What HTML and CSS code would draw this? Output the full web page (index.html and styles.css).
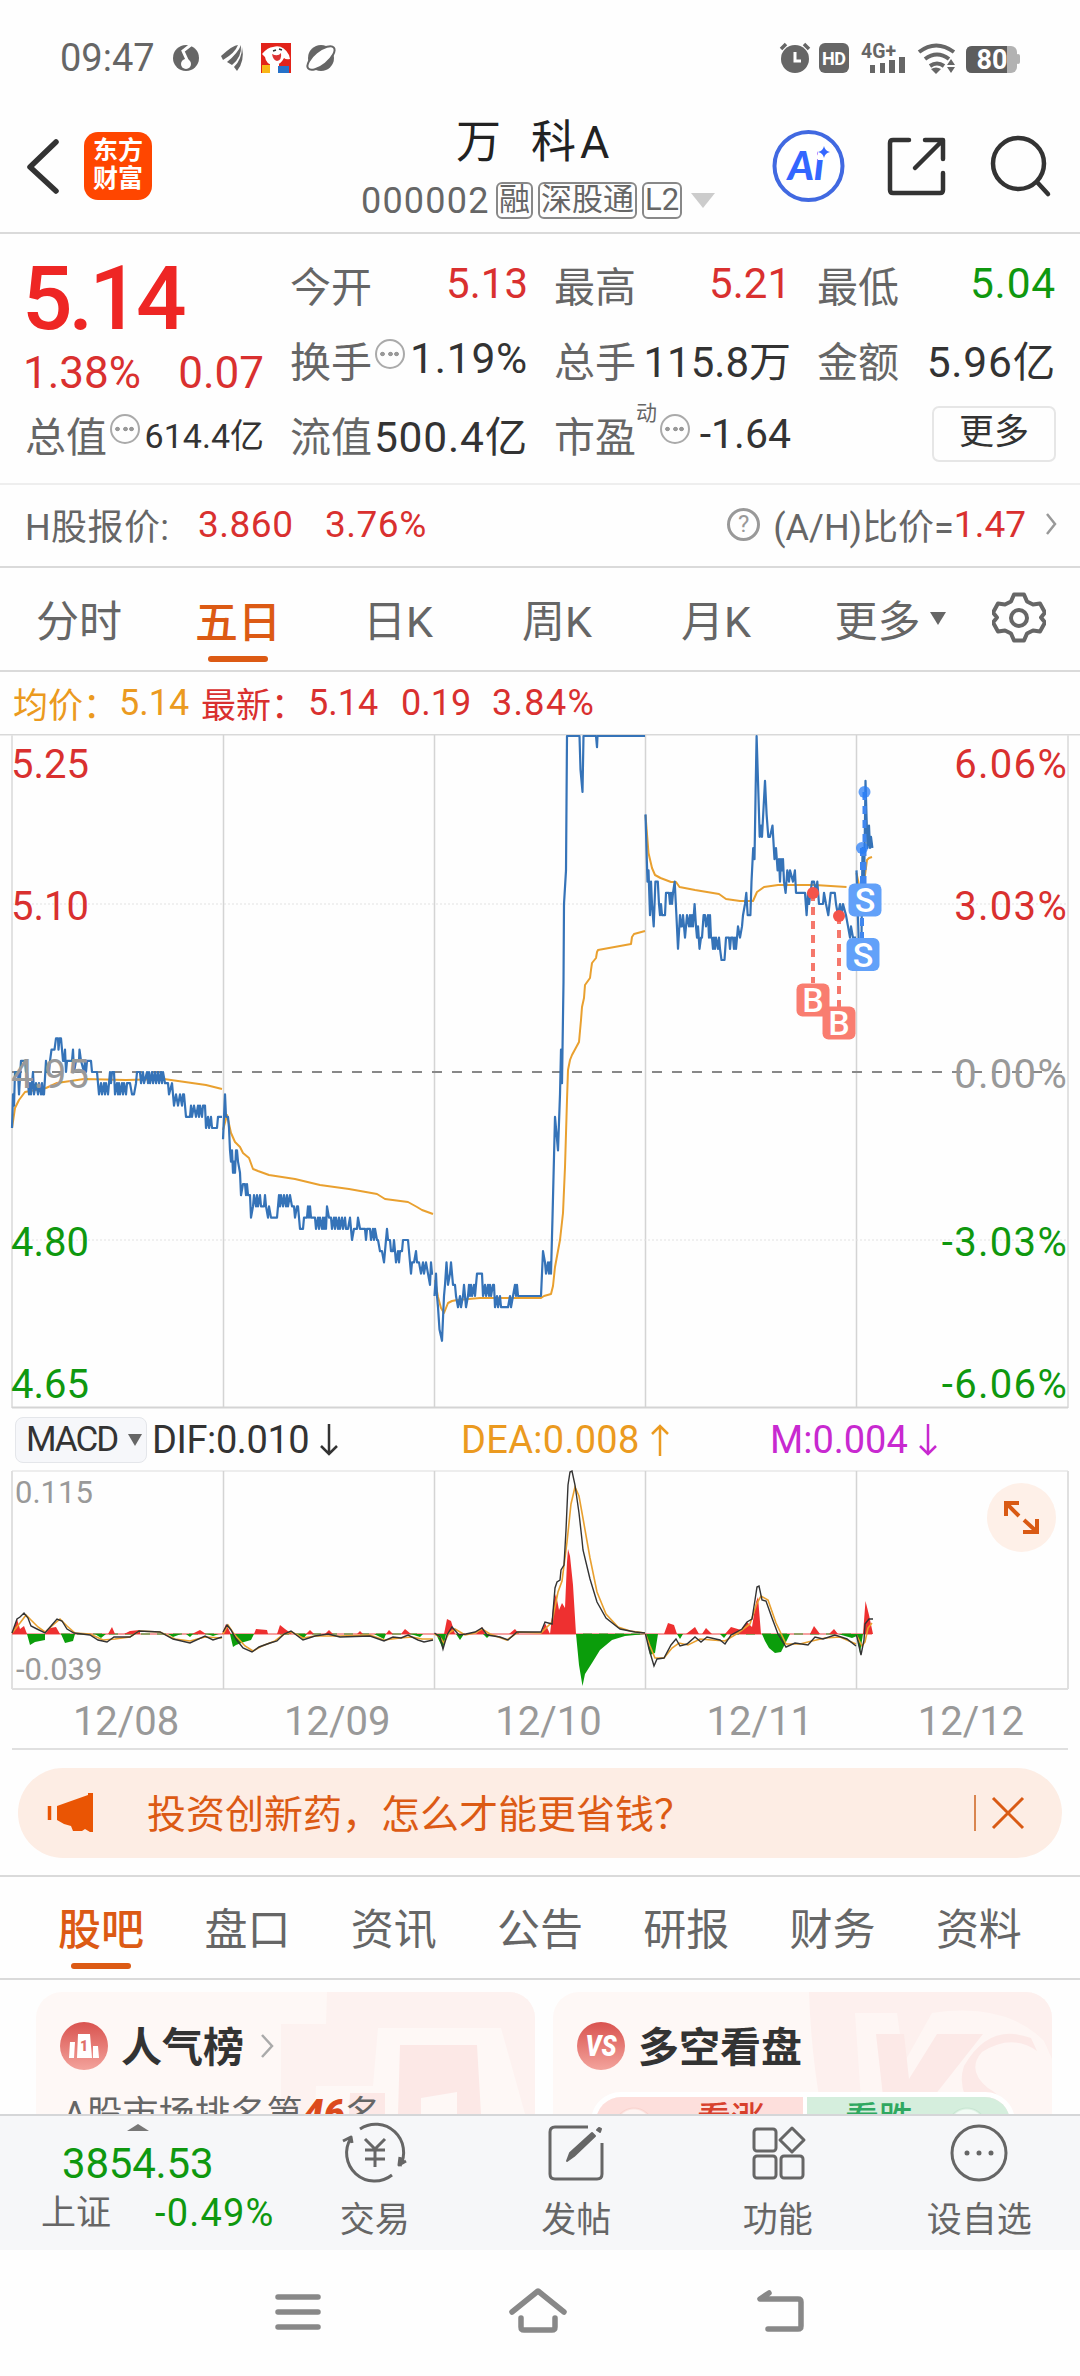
FILE: index.html
```html
<!DOCTYPE html>
<html lang="zh-CN">
<head>
  <meta charset="UTF-8">
  <meta name="viewport" content="width=device-width, initial-scale=1.0">
  <title>万 科A 000002</title>
  <link rel="stylesheet" href="styles.css">
</head>
<body>

  <div class="status">
    <span class="clock">09:47</span>
    <svg class="status-left" width="170" height="36" viewBox="170 40 170 36">
      <circle cx="186" cy="58" r="13" fill="#666"/>
      <path d="M192 44 L183 51 L188 62" fill="none" stroke="#fff" stroke-width="3"/>
      <circle cx="186" cy="64" r="5" fill="#fff"/>
      <path d="M221 56q12-11 17-11q-3 8-15 15z M227 62q11-9 14-17q1 12-9 20z M234 67q8-8 8-20q3 14-5 24z" fill="#666"/>
      <rect x="261" y="43" width="30" height="30" fill="#e2231a"/>
      <path d="M262 54q6-7 11-7q10-3 16 8l1 4q-4 1-6-1q-4 8-11 7q-7-1-8-8z" fill="#fff"/>
      <path d="M272 54q6 3 9-1q1 7-4 8q-4-1-5-7z" fill="#d33"/>
      <path d="M273 51l3-1M279 49l3 1" stroke="#333" stroke-width="1.5"/>
      <path d="M270 64h9v9h-9z" fill="#fff"/>
      <path d="M262 65h8v8h-8z" fill="#f8b617"/>
      <path d="M278 66h11v7h-11z" fill="#2672c9"/>
      <circle cx="321" cy="58" r="13" fill="#666"/>
      <ellipse cx="321" cy="58" rx="16.500" ry="7" transform="rotate(-39 321 58)" fill="#fff" stroke="#666" stroke-width="2"/>
    </svg>
    <svg class="status-right" width="245" height="36" viewBox="778 40 245 36">
      <circle cx="795" cy="59" r="14" fill="#666"/>
      <path d="M781 49l5-5M804 44l5 5" stroke="#666" stroke-width="3.5"/>
      <path d="M795 52v9h6" fill="none" stroke="#fff" stroke-width="3"/>
      <rect x="819" y="43" width="30" height="30" rx="6" fill="#666"/>
      <text x="834" y="65" class="s-hd" textLength="24">HD</text>
      <text x="861" y="58" class="s-4g" textLength="35" lengthAdjust="spacingAndGlyphs">4G+</text>
      <path d="M870 65h5v8h-5zM880 63h5v10h-5zM889 60h6v13h-6zM899 57h6v16h-6z" fill="#666"/>
      <g fill="none" stroke="#666" stroke-width="4">
        <path d="M919 52q17-13 35 0"/>
        <path d="M925 59q12-9 24 0"/>
        <path d="M930 66q7-5 14 0"/>
      </g>
      <path d="M931 69q5-3 10 0l-5 5z" fill="#666"/>
      <path d="M947 65l4-6l4 6zM947 67l4 6l4-6z" fill="#666"/>
      <rect x="966" y="46" width="51" height="27" rx="6" fill="#b2b2b2"/>
      <rect x="1016" y="54" width="4" height="10" rx="2" fill="#b2b2b2"/>
      <path d="M972 46h35v27h-35q-6 0-6-6v-15q0-6 6-6z" fill="#5d5d5d"/>
      <text x="992" y="69" class="s-bat">80</text>
    </svg>
  </div>

  <header class="header">
    <div class="header-left">
      <svg width="34" height="60" viewBox="25 136 34 60"><path d="M56 142L30 167L56 191" fill="none" stroke="#333" stroke-width="5.5" stroke-linecap="round" stroke-linejoin="round"/></svg>
      <div class="logo">东方<br>财富</div>
    </div>
    <div class="stock">
      <div class="stock-name"><span>万</span><span>科A</span></div>
      <div class="stock-code">
        <span class="code">000002</span>
        <span class="tag">融</span>
        <span class="tag">深股通</span>
        <span class="tag">L2</span>
        <span class="drop"></span>
      </div>
    </div>
    <svg class="header-icons" width="285" height="76" viewBox="770 128 285 76">
      <circle cx="808.5" cy="166" r="34" fill="#fff" stroke="#4169e1" stroke-width="4"/>
      <text x="806" y="180" class="ai">Ai</text>
      <rect x="818" y="145" width="15" height="15" fill="#fff"/>
      <path d="M824 146q1 5 6 6q-5 1-6 6q-1-5-6-6q5-1 6-6z" fill="#3366ff"/>
      <g fill="none" stroke="#333" stroke-width="4.5" stroke-linecap="round" stroke-linejoin="round">
        <path d="M909 140h-16q-3 0-3 3v47q0 3 3 3h47q3 0 3-3v-17"/>
        <path d="M925 140h18v19M942 141l-27 27"/>
        <circle cx="1018.5" cy="163.5" r="25.5"/>
        <path d="M1037 182l11 12"/>
      </g>
    </svg>
  </header>

  <section class="quote">
    <div class="price-box">
      <div class="price">5.14</div>
      <div class="change"><span>1.38%</span><span>0.07</span></div>
    </div>
    <div class="cell"><span class="k">今开</span><span class="v red">5.13</span></div>
    <div class="cell"><span class="k">最高</span><span class="v red">5.21</span></div>
    <div class="cell"><span class="k">最低</span><span class="v wide green">5.04</span></div>
    <div class="cell"><span class="k">换手</span><span class="info"></span><span class="v wide">1.19%</span></div>
    <div class="cell"><span class="k">总手</span><span class="v">115.8万</span></div>
    <div class="cell"><span class="k">金额</span><span class="v wide">5.96亿</span></div>
    <div class="cell"><span class="k">总值</span><span class="info"></span><span class="v small">614.4亿</span></div>
    <div class="cell"><span class="k">流值</span><span class="v wide">500.4亿</span></div>
    <div class="cell"><span class="k">市盈</span><sup class="dong">动</sup><span class="info"></span><span class="v mid">-1.64</span></div>
    <div class="cell"><span class="more-btn">更多</span></div>
  </section>

  <section class="hshare">
    <span class="h-label">H股报价:</span>
    <span class="red h-price">3.860</span>
    <span class="red h-rate">3.76%</span>
    <span class="help">?</span>
    <span>(A/H)比价=</span><span class="red ratio">1.47</span>
    <svg class="arrow" width="12" height="24" viewBox="0 0 12 24"><path d="M2 2l8 10l-8 10" fill="none" stroke="#999" stroke-width="2.5"/></svg>
  </section>

  <nav class="periods">
    <span>分时</span>
    <span class="active">五日</span>
    <span>日K</span>
    <span>周K</span>
    <span>月K</span>
    <span class="more">更多<i class="caret"></i></span>
    <svg width="54" height="54" viewBox="-27 -27 54 54">
      <path d="M-5 -23h10l3 7l6 3l7-1l5 9l-4 5l4 5l-5 9l-7-1l-6 3l-3 7h-10l-3-7l-6-3l-7 1l-5-9l4-5l-4-5l5-9l7 1l6-3z" transform="translate(0 -.5)" fill="none" stroke="#666" stroke-width="4" stroke-linejoin="round"/>
      <circle r="8" fill="none" stroke="#666" stroke-width="4"/>
    </svg>
  </nav>

  <div class="latest">
    <span class="avg">均价：</span><span class="avg n1">5.14</span>
    <span class="red">最新：</span><span class="red n2">5.14</span>
    <span class="red n3">0.19</span>
    <span class="red n4">3.84%</span>
  </div>

  <!-- 五日分时图 -->
  <svg class="chart" width="1080" height="675" viewBox="0 734 1080 675">
    <path d="M0 734.5H1080" stroke="#d9d9d9" stroke-width="2"/>
    <path d="M12 735V1408M1068 735V1408" stroke="#e2e2e2" stroke-width="2"/>
    <path d="M223.5 735V1408M434.5 735V1408M645.5 735V1408M856.5 735V1408" stroke="#d4d4d4" stroke-width="1.5"/>
    <path d="M12 1407.5H1068" stroke="#d4d4d4" stroke-width="2"/>
    <path d="M12 904H1068M12 1240H1068" stroke="#e2e2e2" stroke-dasharray="2 2"/>
    <path d="M12 1072H1064" stroke="#888" stroke-width="2" stroke-dasharray="10 10"/>
    <g class="line-avg">
      <polyline points="12,1128 15,1108 19,1100 25,1092 46,1088 57,1083 84,1079 126,1080 164,1079 185,1082 206,1085 222,1089"/>
      <polyline points="223,1130 227,1115 231,1133 235,1142 240,1147 243,1153 249,1158 253,1169 258,1171 269,1175 295,1179 320,1185 349,1189 377,1194 385,1199 408,1202 417,1207 422,1210 433,1214"/>
      <polyline points="435,1280 438,1297 441,1308 444,1313 448,1303 452,1301 457,1300 480,1298 541,1298 544,1296 551,1294 553,1286 555,1267 560,1240 563,1213 565,1167 567,1100 568,1070 570,1060 572,1055 579,1042 581,1020 582,1007 584,998 585,985 590,978 591,970 592,963 596,958 597,952 598,950 609,948 631,944 632,937 634,934 645,931"/>
      <polyline points="645.5,815 648.5,853 652,868 655,875 660.5,878 671,882 676,882 679.5,887 695,890 719,894 726,899 740,901 753,901 757,892 764,887 778,885 815,885 846.5,887"/>
      <polyline points="856.5,873 859,885 862,892 865,875 867,860 869,858 872,857"/>
    </g>
    <!-- y 为相对昨收的价位(分) -->
    <g class="line-price" transform="translate(0 1072) scale(1 -11.2)">
      <polyline points="12,-5 13,-2 14,-3 15,0 18,0 19,-2 21,1 25,1 26,0 27,0 29,-2 30,-1 31,-2 33,0 34,-2 36,-1 38,-2 39,-1 41,-2 42,-1 43,-2 44,-2 46,1 47,0 49,0 50,1 51.5,2 54.5,2 56,3 58,3 58.5,2 59.5,3 61,3 62,2 63,1 64,1 65,2 66,0 67,1 72,1 73,2 74,0 76,1 79,1 79.5,2 81,1 84,0 85,1 86,0 87,1 91,1 92,0 97,0 99,-2 101,-1 102,-2 104,-1 105,-2 106,-1 108,-2 110,0 111,-1 112,0 114,0 115,-2 117,-1 118,-2 119,-1 120,-2 122,-1 123,-2 124,-1 126,-2 127,-1 130,-1 132,-2 134,-2 136,-1 137,0 140,0 141,-1 143,0 144,-1 147,0 148,-1 149,0 150,-1 152,0 153,-1 155,0 156,-1 158,0 159,-1 161,0 162,-1 163,0 165,-1 168,-1 169,-2 172,-1 174,-3 176,-2 178,-3 180,-2 182,-3 183,-2 184,-2 186,-4 190,-4 191,-3 192,-4 194,-3 196,-4 198,-3 199,-4 200,-3 202,-4 203,-3 205,-3 206,-5 208,-4 209,-5 211,-4 212,-5 217,-5 218,-4 222,-4"/>
      <polyline points="223,-6 225,-2 226,-4 228,-4 229,-5 230,-7 231,-8 232,-7 233,-9 234,-8 235,-9 236,-7 237,-7 238,-8 240,-9 241,-11 243,-10 245,-10 246,-11 247,-10 248,-11 250,-11 251,-13 253,-12 254,-11 256,-12 257,-11 258,-12 260,-11 261,-12 264,-12 265,-11 266,-12 268,-13 269,-12 271,-13 277,-13 279,-11 280,-12 281,-11 283,-12 284,-11 286,-12 287,-11 288,-12 290,-11 292,-12 294,-12 295,-13 297,-12 298,-12 300,-14 303,-14 304,-13 307,-13 308,-12 309,-13 310,-12 311,-13 315,-13 316,-14 318,-13 319,-14 320,-13 322,-14 323,-13 324,-14 325,-13 326,-14 327,-12 329,-13 331,-13 332,-14 334,-13 335,-14 336,-13 338,-14 339,-13 340,-14 342,-13 343,-14 345,-13 346,-14 348,-14 350,-13 351,-14 352,-15 354,-14 357,-14 358,-13 360,-14 365,-14 366,-15 367,-14 370,-14 371,-15 373,-14 374,-15 375,-14 377,-15 378,-15 380,-16 382,-16 384,-17 385,-16 387,-14 388,-15 390,-15 391,-16 393,-16 394,-15 396,-17 398,-16 399,-17 400,-16 402,-16 403,-15 408,-15 409,-16 411,-18 412,-17 414,-17 416,-16 417,-17 419,-17 421,-18 423,-17 424,-18 426,-17 428,-18 430,-19 431,-17 432,-18 433,-18"/>
      <polyline points="434.5,-20 436,-18 437,-20 438,-21 439.5,-23 442,-24 444,-20 445,-19 446.5,-17 448,-19 450,-18 451,-17 453,-19 455,-19 456,-20 458,-21 460,-20 461,-21 463,-20 464,-19 466,-21 468,-20 469,-19 470,-20 471,-19 472,-20 474,-19 475,-20 477,-18 482,-18 483,-20 485,-19 486,-20 488,-19 489,-20 490,-19 491,-20 493,-19 494,-19 495,-21 497,-20 498,-21 500,-20 501,-21 508,-21 510,-20 511,-21 513,-20 515,-19 516,-20 517,-19 518,-20 541,-20 543,-16 545,-17 546,-18 548,-17 549,-18 550,-17 551,-18 552.5,-13 555,-4 556,-5 558,-7 560,-2 561,2 562,-1 563.5,8 564,15 566,18 566.5,24 567,30 579.5,30 580.5,27 582.5,25 583.5,30 596,30 597,29 597.5,30 645,30"/>
      <polyline points="645.5,23 646.8,19 647.5,17 648.5,18 650,14 651,17 652,15 653.7,13 655.4,17 657.8,17 659,15 660,14 661,15 662,14 665,14 666,16 669,16 670,15 671,16 672,15 673,16 674.7,17 676.4,14 678,11 680,14 681,13 682,13 683,14 685,12 686,13 687,14 689,13 690,14 691,13 692,14 693,13 694.6,15 696,13 697,12 698,13 699.5,11 701,12 702,12 703.6,14 705,14 706,13 708,14 709,12 710,14 711,12 712,12 713,11 714,12 715,11 716,12 718,11 719,12 720,11 721.5,10 724.5,10 726,12 729,12 730,11 731,12 733,12 734,11 735,12 736,11 738,13 740,12 742,13 743,14 745,15 746.3,16 747.7,14 750.4,14 751.5,17 753.2,20 754.5,19 755.6,25 756.6,30 758,26 759.7,21 761,22 762,21 765,26 766.6,23 768.3,21 770,21 772.5,22 774.5,19 776,20 777.6,18 779,19 780,17 781,19 782,18 783,19 784,17 785.6,16 787.3,18 789,17 790,18 793,17 794.9,18 796,16 805,16 806.6,14 808,16 809,15 812,17 814,17 816,16 817.3,17 819,15 823,15 824,16 826,15 828.3,14 830.7,16 834.8,16 836,15 838,14 840,15 841.7,14 843,15 846,14 848,13 850,12 851,13 853,12 856,12"/>
      <polyline points="856.5,18 858.6,12 860,11 861.5,12 862.5,20 864,16 865.5,26 866.8,22 867.5,20 869,22 870,20 871,21 872.4,20"/>
    </g>
    <g class="axis">
      <text x="11" y="778" class="up">5.25</text>
      <text x="11" y="920" class="up">5.10</text>
      <text x="11" y="1088" class="flat">4.95</text>
      <text x="11" y="1256" class="down">4.80</text>
      <text x="11" y="1398" class="down">4.65</text>
    </g>
    <g class="axis right">
      <text x="1068" y="778" class="up">6.06%</text>
      <text x="1068" y="920" class="up">3.03%</text>
      <text x="1068" y="1088" class="flat">0.00%</text>
      <text x="1068" y="1256" class="down">-3.03%</text>
      <text x="1068" y="1398" class="down">-6.06%</text>
    </g>
    <path d="M813 893V983M839 916V1008" stroke="#f5786c" stroke-width="4" stroke-dasharray="8 6"/>
    <path d="M864.5 792V885M862 848V940" stroke="#3f86ee" stroke-width="4" stroke-dasharray="8 6"/>
    <g fill="#f5544a"><circle cx="813" cy="893" r="6"/><circle cx="839" cy="916" r="6"/></g>
    <g fill="#2a7df5" fill-opacity=".75"><circle cx="864.5" cy="792" r="6"/><circle cx="862" cy="848" r="6"/></g>
    <g class="mark">
      <rect x="796.5" y="983.5" width="33" height="33" rx="6" fill="#f97d70"/><text x="813" y="1012">B</text>
      <rect x="822.5" y="1006.5" width="33" height="33" rx="6" fill="#f97d70"/><text x="839" y="1035">B</text>
      <rect x="848.5" y="883.5" width="33" height="33" rx="6" fill="#62a1f9"/><text x="865" y="912">S</text>
      <rect x="846.5" y="938" width="33" height="33" rx="6" fill="#62a1f9"/><text x="863" y="967">S</text>
    </g>
  </svg>

  <div class="macd-head">
    <span class="chip">MACD<i class="caret"></i></span>
    <span class="dif">DIF:0.010<svg width="18" height="34" viewBox="0 0 18 34"><path d="M9 1v30M1 23l8 8l8-8"/></svg></span>
    <span class="dea">DEA:0.008<svg width="18" height="34" viewBox="0 0 18 34"><path d="M9 33v-30M1 11l8-8l8 8"/></svg></span>
    <span class="m">M:0.004<svg width="18" height="34" viewBox="0 0 18 34"><path d="M9 1v30M1 23l8 8l8-8"/></svg></span>
  </div>

  <svg class="macd" width="1080" height="220" viewBox="0 1470 1080 220">
    <path d="M12 1471H1068" stroke="#dcdcdc"/>
    <path d="M12 1471V1689M1068 1471V1689M12 1689H1068" fill="none" stroke="#e0e0e0" stroke-width="2"/>
    <path d="M223.5 1471V1689M434.5 1471V1689M645.5 1471V1689M856.5 1471V1689" stroke="#d4d4d4" stroke-width="1.5"/>
    <text x="15" y="1503" class="scale">0.115</text>
    <text x="16" y="1680" class="scale">-0.039</text>
    <path d="M12 1634H872" stroke="#e44" stroke-width="1"/>
    <path d="M61 1634H218M280 1634H420M583 1634H645M730 1634H856" stroke="#2ca02c" stroke-width="1" stroke-dasharray="9 7"/>
    <path fill="#ee3030" d="M12 1634L17 1619L20 1629L24 1626L27 1634zM45 1634L50 1628L56 1627L60 1634zM108 1634L112 1627L115 1634zM124 1634L130 1631L140 1630V1634zM192 1634L200 1630L206 1634zM222 1634L226 1624L231 1634zM254 1634L256 1629L267 1630L268 1634zM277 1634L280 1625L285 1629L292 1634zM306 1634L310 1630L314 1634zM325 1634L329 1630L333 1634zM357 1634L360 1631L363 1634zM386 1634L389 1630L393 1634zM401 1634L405 1629L411 1634zM444 1634L447 1619L451 1621L455 1634zM476 1634L482 1627L485 1634zM509 1634L515 1629L519 1634zM541 1634L545 1623L550 1634L554 1600L556 1594L559 1610L562 1603L565 1608L567 1562L568 1549L570 1556L573 1585L576 1634zM664 1634L668 1623L674 1625L677 1634zM686 1634L695 1627L699 1634zM702 1634L706 1628L712 1634zM725 1634L731 1627L741 1630L747 1622L752 1627L756 1602L758 1597L761 1634zM810 1634L814 1626L820 1634zM829 1634L834 1629L838 1634zM863 1634L865.5 1601L869 1615L873 1634z"/>
    <path fill="#0b9d0b" d="M27 1634L30 1645L35 1642L45 1640V1634zM61 1634L65 1643L73 1641L75 1634zM95 1634L101 1638L106 1634zM168 1634L173 1637L181 1634zM186 1634L190 1637L193 1634zM207 1634L213 1636L219 1634zM230 1634L233 1647L236 1645L244 1642L251 1640L254 1634zM298 1634L303 1639L307 1634zM374 1634L384 1639L386 1634zM411 1634L420 1637L423 1634zM436 1634L443 1649L446 1634zM456 1634L460 1640L464 1634zM483 1634L487 1638L491 1634zM576 1634L579 1665L582.5 1686L585 1674L592 1663L600 1650L612 1640L625 1636L645 1634zM646 1634L650 1655L655 1653L658 1634zM677 1634L680 1639L683 1634zM720 1634L724 1638L727 1634zM762 1634L765 1641L769 1648L775 1653L781 1652L790 1634zM838 1634L852 1638L857 1636L860 1653L863 1634z"/>
    <g class="macd-slow">
      <polyline points="12,1633 20,1623 26,1615 31,1620 38,1627 45,1632 53,1625 60,1619 67,1626 75,1633 90,1634 103,1640 115,1639 130,1637 139,1631 160,1632 175,1639 190,1641 205,1637 222,1638"/>
      <polyline points="223,1634 228,1625 234,1634 245,1646 253,1651 262,1646 275,1641 284,1634 292,1632 303,1638 315,1636 340,1636 370,1635 384,1640 400,1638 412,1637 422,1639 433,1639"/>
      <polyline points="434.5,1634 440,1637 444,1643 449,1633 455,1629 465,1635 475,1633 482,1629 490,1634 507,1640 518,1632 541,1633 552,1622 558,1592 562,1581 567,1542 571,1504 575,1487 579,1496 584,1524 590,1558 597,1592 606,1614 618,1627 630,1631 645,1633"/>
      <polyline points="645.5,1634 650,1646 655,1658 664,1658 672,1648 679,1643 688,1645 700,1639 712,1640 725,1641 738,1633 750,1624 757,1603 761,1596 768,1600 776,1623 786,1644 800,1644 812,1641 825,1638 840,1637 856,1644"/>
      <polyline points="856.5,1635 862,1646 865,1642 868,1628 872,1623"/>
    </g>
    <g class="macd-fast">
      <polyline points="12,1633 17,1619 20,1617 24,1613 28,1618 31,1626 37,1629 45,1633 51,1626 57,1619 62,1621 67,1629 74,1633 90,1635 98,1640 107,1642 114,1637 130,1637 139,1631 160,1632 173,1639 190,1643 205,1636 213,1640 222,1637"/>
      <polyline points="223,1632 227,1625 231,1630 236,1639 243,1648 252,1652 259,1647 270,1643 277,1641 284,1634 291,1631 303,1640 315,1636 328,1634 340,1637 370,1636 384,1641 393,1637 401,1638 408,1635 418,1640 424,1642 433,1640"/>
      <polyline points="434.5,1633 440,1637 443,1649 447,1635 452,1627 459,1635 466,1634 475,1632 482,1628 487,1635 500,1637 508,1640 517,1632 541,1632 545,1622 552,1624 555,1588 557,1582 560,1580 561,1570 564,1565 566,1530 568,1485 570,1472 572,1471 575,1485 579,1513 582,1540 583,1550 590,1579 597,1602 606,1618 620,1629 635,1632 645,1633"/>
      <polyline points="645.5,1634 649,1649 654,1666 657,1659 664,1658 671,1645 676,1639 680,1646 687,1644 695,1637 701,1642 707,1637 720,1640 725,1644 731,1635 742,1629 747,1622 752,1619 755,1600 757,1587 759,1586 762,1600 766,1601 772,1618 778,1634 786,1647 795,1643 808,1645 815,1637 823,1639 835,1635 847,1639 856,1646"/>
      <polyline points="856.5,1635 861,1655 864,1640 865,1624 869,1619 873,1619"/>
    </g>
    <circle cx="1021.5" cy="1517.5" r="34.5" fill="#fef0e8"/>
    <path d="M1006 1516v-13h13M1007 1504l12 12M1037 1519v13h-14M1036 1531l-12-11" fill="none" stroke="#d95a14" stroke-width="4"/>
  </svg>

  <div class="dates">
    <span>12/08</span><span>12/09</span><span>12/10</span><span>12/11</span><span>12/12</span>
  </div>

  <div class="banner">
    <svg width="48" height="42" viewBox="46 1792 48 42"><path d="M93 1793v39h-3l-5-3l-3 2h-9l-2-5l-7-2l-7-4v-14l31-11v-2z" fill="#ea5504"/><path d="M49.500 1806v14" stroke="#ea5504" stroke-width="3.500"/></svg>
    <span class="banner-text">投资创新药，怎么才能更省钱？</span>
    <span class="split"></span>
    <svg width="34" height="34" viewBox="0 0 34 34"><path d="M2 2l30 30M32 2l-30 30" stroke="#d95a14" stroke-width="3"/></svg>
  </div>

  <nav class="tabs">
    <span class="active">股吧</span>
    <span>盘口</span>
    <span>资讯</span>
    <span>公告</span>
    <span>研报</span>
    <span>财务</span>
    <span>资料</span>
  </nav>

  <section class="cards">
    <div class="card rank">
      <div class="card-title">
        <svg width="48" height="48" viewBox="0 0 48 48">
          <defs><linearGradient id="badge" x1="0" y1="0" x2="0" y2="1"><stop offset="0" stop-color="#d9534f"/><stop offset="1" stop-color="#f3a39c"/></linearGradient></defs>
          <circle cx="24" cy="24" r="24" fill="url(#badge)"/>
          <path d="M10 20h5l-1 16h-5zM18 12h12l2 24h-15zM33 24h5l1 12h-6z" fill="#fff"/>
          <text x="24" y="29" class="badge-one">1</text>
        </svg>
        <b>人气榜</b>
        <svg class="go" width="14" height="24" viewBox="0 0 14 24"><path d="M2 1l10 11l-10 11" fill="none" stroke="#aaa" stroke-width="2.5"/></svg>
      </div>
      <div class="rank-text">A股市场排名第<em>46</em>名</div>
      <svg class="card-bg" width="260" height="122" viewBox="275 1992 260 122">
        <path d="M327 1992h208v122h-10l-24-86h-123l-5 58h-57l-1 28h-34v-90h45z" fill="#fdf2f0"/>
        <path d="M400 2045h77l4 69h-24v-22l-36 6v16h-23zM350 2093h35v21h-36z" fill="#fce8e6"/>
      </svg>
    </div>
    <div class="card versus">
      <div class="card-title">
        <svg width="48" height="48" viewBox="0 0 48 48">
          <circle cx="24" cy="24" r="24" fill="url(#badge)"/>
          <text x="24" y="34" class="badge-vs" textLength="31" lengthAdjust="spacingAndGlyphs">VS</text>
        </svg>
        <b>多空看盘</b>
      </div>
      <div class="vote"><span class="rise">看涨</span><span class="fall">看跌</span></div>
      <svg class="card-bg" width="245" height="122" viewBox="807 1992 245 122">
        <path d="M809 1992h243v122h-230q-11-60-13-122z" fill="#fdf0ee"/>
        <path d="M855 2013h42l7 50l28-50q74-11 112 28l8 18v55h-190z" fill="#fef6f4"/>
        <path d="M876 2034h28l5 45l28-45h46l-63 80h-35zM1037 2051q-25-18-55 1q-16 18 6 36q20 12 20 26h-32q-20-25-12-48q25-44 67-28z" fill="#fce9e7"/>
      </svg>
    </div>
  </section>

  <footer class="toolbar">
    <div class="index">
      <i class="caret-up"></i>
      <div class="index-value">3854.53</div>
      <div class="index-row"><span>上证</span><span class="green rate">-0.49%</span></div>
    </div>
    <div class="tool">
      <svg width="68" height="62" viewBox="-34 -31 68 62">
        <path d="M-15 -24A28 28 0 0 1 25 13M17 22A28 28 0 0 1 -24 -15M-32 -12l8-4l1 6M31 8l-7 4l1-8"/>
        <path d="M-10 -14l10 10l10-10M0 -4v18M-10 -3h20M-10 6h20"/>
      </svg>
      <span>交易</span>
    </div>
    <div class="tool">
      <svg width="68" height="62" viewBox="-34 -31 68 62">
        <path d="M12 -26h-33q-5 0-5 5v42q0 5 5 5h42q5 0 5-5v-31"/>
        <path d="M-9 8l3-8l22-20l3 3l-21 20z" class="solid"/>
        <path d="M21 -23l2-2l2 1l-1 3z" class="solid"/>
      </svg>
      <span>发帖</span>
    </div>
    <div class="tool">
      <svg width="68" height="62" viewBox="-34 -31 68 62">
        <rect x="-24" y="-24" width="22" height="22" rx="3"/>
        <rect x="-24" y="3" width="22" height="22" rx="3"/>
        <rect x="3" y="3" width="22" height="22" rx="3"/>
        <path d="M14 -25l12 12l-12 12l-12-12z"/>
      </svg>
      <span>功能</span>
    </div>
    <div class="tool">
      <svg width="68" height="62" viewBox="-34 -31 68 62">
        <circle r="27"/>
        <g class="solid"><circle cx="-12" r="1.500"/><circle r="1.500"/><circle cx="12" r="1.500"/></g>
      </svg>
      <span>设自选</span>
    </div>
  </footer>

  <div class="sysnav">
    <svg width="50" height="44" viewBox="275 2291 50 44"><path d="M280 2298h40M280 2313h40M280 2328h40"/></svg>
    <svg width="62" height="50" viewBox="509 2285 62 50"><path d="M514 2310l26-21l26 21M523 2316v9q0 3 3 3h28q3 0 3-3v-9"/></svg>
    <svg width="54" height="50" viewBox="753 2286 54 50"><path d="M769 2292l-9 6h38q3 0 3 3v24q0 3-3 3h-30"/></svg>
  </div>

</body>
</html>
```

FILE: styles.css
```css
:root {
  --red: #d9302f;
  --green: #0f980f;
  --orange: #dc5a14;
  --grey: #666;
  --line: #dadada;
}
* {
  box-sizing: border-box;
}
body {
  margin: 0;
  width: 1080px;
  height: 2376px;
  overflow: hidden;
  background: #fefefe;
  color: #333;
  font-family: Roboto, "Noto Sans CJK SC", sans-serif;
  white-space: nowrap;
}
svg {
  display: block;
  flex: none;
}
.red { color: var(--red); }
.green { color: var(--green); }

/* 状态栏 */
.status {
  height: 116px;
  display: flex;
  align-items: center;
  padding: 0 57px 0 60px;
  color: var(--grey);
}
.clock {
  width: 110px;
  font-size: 38px;
}
.status-right {
  margin-left: auto;
}
.s-hd, .s-4g, .s-bat {
  font-weight: 700;
  fill: #666;
}
.s-hd { font-size: 18px; fill: #fff; text-anchor: middle; }
.s-4g { font-size: 21px; }
.s-bat { font-size: 27px; fill: #fff; text-anchor: middle; }

/* 标题栏 */
.header {
  height: 118px;
  display: grid;
  grid-template-columns: 340px 400px 1fr;
  border-bottom: 2px solid var(--line);
}
.header-left {
  display: flex;
  align-items: center;
  padding: 0 0 16px 25px;
  gap: 25px;
}
.logo {
  width: 68px;
  height: 68px;
  border-radius: 14px;
  background: #ff4600;
  color: #fff;
  font-size: 25px;
  font-weight: 700;
  line-height: 28px;
  text-align: center;
  padding-top: 5px;
}
.stock {
  display: flex;
  flex-direction: column;
}
.stock-name {
  display: flex;
  gap: 26px;
  font-size: 45px;
  line-height: 54px;
  padding-left: 116px;
  margin-bottom: 11px;
  color: #222;
  letter-spacing: 4px;
}
.stock-code {
  display: flex;
  align-items: center;
  height: 39px;
  padding-left: 21px;
  gap: 5px;
  color: var(--grey);
}
.code {
  font-size: 36px;
  width: 130px;
  letter-spacing: 1.2px;
}
.tag {
  height: 37px;
  border: 2px solid #888;
  border-radius: 6px;
  padding: 0 1px;
  font-size: 31px;
  line-height: 32px;
}
.drop {
  border: 12px solid transparent;
  border-top: 15px solid #ccc;
  border-bottom: 0;
  margin-left: 4px;
}
.header-icons {
  margin: 12px 0 0 30px;
}
.ai {
  font: italic 900 40px Lato, sans-serif;
  fill: #3366ff;
  text-anchor: middle;
}

/* 行情 */
.quote {
  height: 251px;
  display: grid;
  grid-template-columns: 239px 238px 237px 239px;
  grid-template-rows: repeat(3, 75px);
  column-gap: 26px;
  padding: 12px 0 0 25px;
  border-bottom: 2px solid #eee;
}
.price-box {
  grid-row: span 2;
}
.price {
  color: #ee2624;
  font-size: 89px;
  font-weight: 500;
  line-height: 96px;
  letter-spacing: -4px;
  padding-top: 5px;
  margin-left: -3px;
}
.change {
  display: flex;
  justify-content: space-between;
  color: var(--red);
  font-size: 44px;
  line-height: 46px;
  margin: 3px 0 0 -2px;
}
.cell {
  display: flex;
  align-items: center;
}
.k {
  font-size: 41px;
  color: var(--grey);
}
.v {
  margin-left: auto;
  font-size: 42px;
}
.v.wide {
  font-size: 42.5px;
  letter-spacing: .8px;
}
.v.mid { font-size: 41px; }
.v.small { font-size: 34px; }
.info {
  width: 30px;
  height: 30px;
  margin: -10px 0 0 3px;
  border: 2.5px solid #aaa;
  border-radius: 50%;
  background: radial-gradient(circle, #999 2px, transparent 2.6px) center / 7px 8px no-repeat,
    radial-gradient(circle, #999 2px, transparent 2.6px) 2px center / 7px 8px no-repeat,
    radial-gradient(circle, #999 2px, transparent 2.6px) 16px center / 7px 8px no-repeat;
}
.dong {
  font-size: 21px;
  line-height: 24px;
  margin-top: -42px;
  color: var(--grey);
}
.more-btn {
  margin-left: auto;
  width: 124px;
  height: 56px;
  border: 2px solid #e6e6e6;
  border-radius: 7px;
  text-align: center;
  font-size: 35px;
  line-height: 50px;
}

/* H股 */
.hshare {
  height: 83px;
  display: flex;
  align-items: center;
  padding: 0 23px 3px 25px;
  border-bottom: 2px solid var(--line);
  font-size: 36px;
  color: var(--grey);
}
.hshare .red { color: var(--red); }
.h-label { width: 173px; letter-spacing: .4px; }
.h-price, .h-rate {
  font-size: 37px;
  letter-spacing: .5px;
}
.h-price { width: 127px; }
.help {
  width: 33px;
  height: 33px;
  margin: 0 13px 0 auto;
  border: 3px solid #999;
  border-radius: 50%;
  color: #999;
  text-align: center;
  font-size: 24px;
  line-height: 27px;
}
.ratio { font-size: 37px; }
.arrow { margin-left: 19px; }

/* 周期 */
.periods {
  height: 104px;
  display: grid;
  grid-template-columns: 158px 160px 160px 158px 160px 188px 1fr;
  align-items: center;
  justify-items: center;
  padding-bottom: 2px;
  border-bottom: 2px solid var(--line);
  font-size: 43px;
  color: var(--grey);
}
.periods svg {
  margin-right: 26px;
}
.more {
  display: flex;
  align-items: center;
}
.caret {
  border: 8px solid transparent;
  border-top: 13px solid #666;
  border-bottom: 0;
  margin-left: 9px;
}
.active {
  color: var(--orange);
  font-weight: 500;
  align-self: stretch;
  display: flex;
  flex-direction: column;
  align-items: center;
  justify-content: flex-end;
  gap: 6px;
  padding-bottom: 6px;
}
.active::after {
  content: "";
  width: 60px;
  height: 6px;
  border-radius: 3px;
  background: var(--orange);
}
.latest {
  height: 62px;
  display: flex;
  align-items: center;
  padding: 0 0 1px 13px;
  font-size: 35px;
}
.avg { color: #eb9a20; }
.n1, .n2, .n3, .n4 { font-size: 36px; }
.n1 { width: 83px; padding-left: 1px; }
.n2 { width: 95px; padding-left: 2px; }
.n3 { width: 91px; }
.n4 { letter-spacing: 1.3px; }

/* 图表 */
.axis {
  font-size: 40px;
}
.right {
  text-anchor: end;
  letter-spacing: 1.3px;
}
.up { fill: var(--red); }
.down { fill: var(--green); }
.flat { fill: #999; }
.line-avg polyline, .line-price polyline {
  fill: none;
  stroke: #e9a02f;
  stroke-width: 2;
  stroke-linejoin: round;
}
.line-price polyline {
  stroke: #3573b8;
  stroke-width: 2.2;
  vector-effect: non-scaling-stroke;
}
.mark text {
  font: 500 34px Roboto, sans-serif;
  fill: #fff;
  text-anchor: middle;
}
.macd-head {
  height: 61px;
  display: grid;
  grid-template-columns: 137px 309px 309px 1fr;
  align-items: center;
  padding-left: 15px;
  font-size: 38px;
}
.macd-head > span {
  display: flex;
  align-items: center;
}
.macd-head svg {
  margin-left: 11px;
  fill: none;
  stroke: currentColor;
  stroke-width: 2.5;
}
.macd-head .dif {
  letter-spacing: -.4px;
}
.macd-head .chip {
  width: 132px;
  height: 46px;
  padding-left: 10px;
  border: 1px solid #e4e6ea;
  border-radius: 8px;
  background: #f6f7fa;
  font-size: 35px;
  letter-spacing: -2px;
}
.chip .caret { margin-left: 11px; border-width: 12px 7px 0; }
.dea { color: #eb9a20; letter-spacing: .3px; }
.m { color: #c829d0; }
.scale {
  font-size: 31px;
  fill: #999;
}
.macd-fast polyline, .macd-slow polyline {
  fill: none;
  stroke: #e9a02f;
  stroke-width: 1.6;
}
.macd-fast polyline { stroke: #333; stroke-width: 1.4; }
.dates {
  height: 60px;
  margin: 0 12px;
  display: grid;
  grid-template-columns: repeat(5, 1fr);
  text-align: center;
  text-indent: 17px;
  border-bottom: 2px solid #e0e0e0;
  font-size: 40px;
  line-height: 63px;
  color: #999;
}

/* 广告条 */
.banner {
  height: 90px;
  margin: 18px 18px 17px;
  border-radius: 45px;
  background: #fdede4;
  display: flex;
  align-items: center;
  padding: 0 37px 0 28px;
  color: var(--orange);
}
.banner-text {
  font-size: 39px;
  margin: -5px 0 0 53px;
}
.split {
  width: 2px;
  height: 36px;
  margin: 0 15px 0 auto;
  background: #d9854f;
}

/* 资讯标签 */
.tabs {
  height: 105px;
  display: grid;
  grid-template-columns: repeat(7, 146.3px);
  justify-content: center;
  justify-items: center;
  align-items: center;
  padding-bottom: 3px;
  border-top: 2px solid var(--line);
  border-bottom: 2px solid var(--line);
  font-size: 43px;
  color: var(--grey);
}
.cards {
  height: 134px;
  padding: 12px 28px 0 36px;
  display: grid;
  grid-template-columns: 499px 499px;
  gap: 18px;
  overflow: hidden;
}
.card {
  position: relative;
  height: 160px;
  border-radius: 26px;
  background: #fef8f6;
  padding: 30px 24px 0;
  overflow: hidden;
}
.card-title {
  display: flex;
  align-items: center;
  height: 48px;
  font-size: 41px;
}
.card-title b {
  margin: -4px 0 0 13px;
  font-weight: 700;
}
.go { margin-left: 16px; }
.badge-one, .badge-vs {
  font-weight: 900;
  font-size: 14px;
  fill: #e0706a;
  text-anchor: middle;
}
.badge-vs {
  font-size: 29px;
  font-style: italic;
  fill: #fff;
}
.card-bg {
  position: absolute;
  right: 0;
  top: 0;
  z-index: 0;
}
.card-title, .rank-text, .vote {
  position: relative;
  z-index: 1;
}
.rank-text {
  margin-top: 21px;
  padding-left: 3px;
  font-size: 36px;
  line-height: 46px;
  color: var(--grey);
}
.rank-text em {
  color: #dc4a1c;
  font-weight: 900;
  font-size: 38px;
}
.vote {
  width: 424px;
  height: 60px;
  margin: 22px 0 0 14px;
  border: 5px solid #fff;
  border-radius: 32px;
  display: grid;
  grid-template-columns: 1fr 1fr;
  overflow: hidden;
  font-size: 34px;
  font-weight: 500;
  line-height: 44px;
}
.rise, .fall {
  padding-left: 101px;
  color: #d8402c;
  background: radial-gradient(circle at 38px 30px, #fef4f2 17px, #f9d4cf 19px, #fddfdc 20px);
}
.fall {
  padding-left: 38px;
  color: #2fa860;
  background: radial-gradient(circle at 160px 30px, #f2fbf5 17px, #c8e6d2 19px, #d5eedd 20px);
  border-left: 4px solid #fff;
}

/* 底部工具栏 */
.toolbar {
  height: 136px;
  display: grid;
  grid-template-columns: 274px repeat(4, 201.5px);
  background: #f6f7f9;
  border-top: 2px solid #d5d6d8;
  color: var(--grey);
}
.index {
  display: flex;
  flex-direction: column;
}
.caret-up {
  width: 0;
  margin: 8px 0 0 127px;
  border: 11px solid transparent;
  border-bottom: 7px solid #777;
  border-top: 0;
}
.index-value {
  color: var(--green);
  font-size: 42px;
  line-height: 50px;
  padding: 8px 0 0 62px;
  letter-spacing: -.2px;
}
.index-row {
  display: flex;
  align-items: center;
  padding-left: 41px;
  gap: 44px;
  font-size: 35px;
  line-height: 49px;
}
.rate {
  font-size: 38px;
  letter-spacing: 1.2px;
}
.tool {
  display: flex;
  flex-direction: column;
  align-items: center;
  padding-top: 6px;
  font-size: 35px;
}
.tool svg {
  overflow: visible;
  fill: none;
  stroke: #666;
  stroke-width: 3;
  stroke-linejoin: round;
}
.tool svg .solid {
  fill: #666;
  stroke-width: 2;
}
.tool span {
  line-height: 50px;
  margin-top: 12px;
}
.sysnav {
  height: 126px;
  display: flex;
  justify-content: center;
  align-items: center;
  padding-bottom: 2px;
  gap: 184px;
}
.sysnav svg {
  fill: none;
  stroke: #888;
  stroke-width: 5.5;
  stroke-linecap: round;
  stroke-linejoin: round;
}
```
